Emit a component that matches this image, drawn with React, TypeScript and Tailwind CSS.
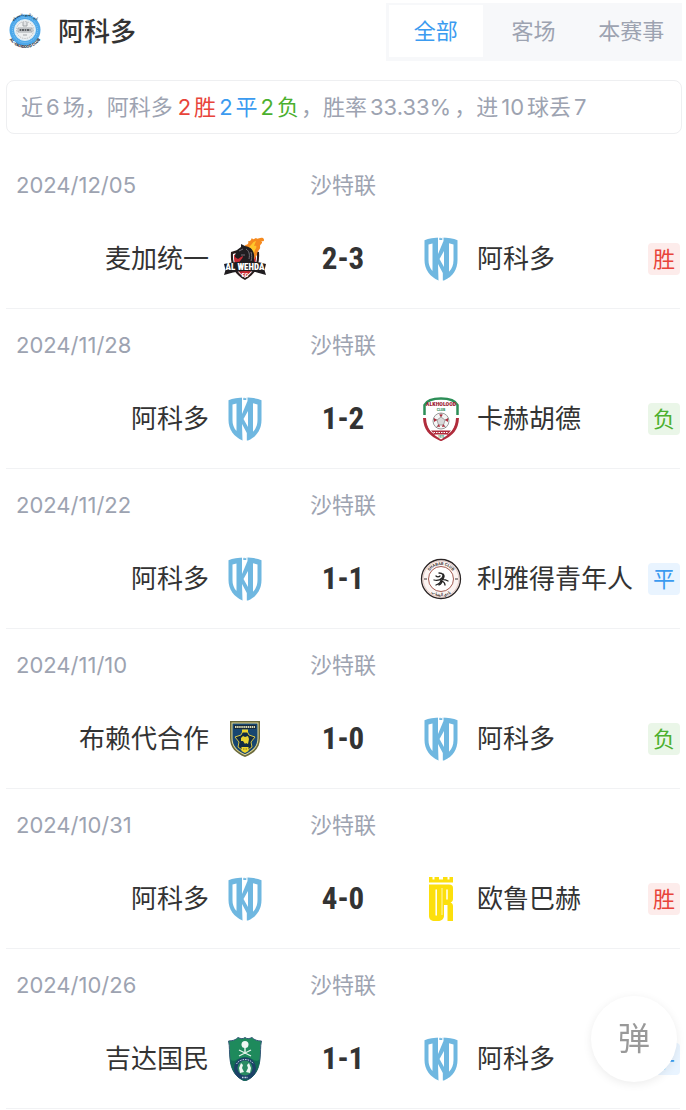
import { useState } from "react";
import type { ReactNode } from "react";

type Result = "win" | "draw" | "loss";

type Team = {
  name: string;
  logo: () => ReactNode;
};

type Match = {
  date: string;
  league: string;
  home: Team;
  away: Team;
  score: string;
  result: Result;
};

function OkhdoodLogo() {
  return (
    <svg viewBox="0 0 44 44" className="size-11 shrink-0" aria-hidden="true">
      <path d="M22 0.500C15 0.500 9.500 1.500 5.500 3.200V23C5.500 33 11 39.500 19.500 43.500H25C34 39.500 38.500 32 38.500 23V3.200C34.500 1.500 29 0.500 22 0.500Z" fill="#6fb7e0" />
      <path d="M9.500 7.500L13.500 6.500V34C10.800 31 9.500 27.500 9.500 23Z" fill="#fff" />
      <path d="M19 0V17L24.500 4V0Z" fill="#fff" />
      <path d="M20.300 0.500L21.200 1.500L21.800 0.500L22.400 1.500L23.300 0.500V3H20.300Z" fill="#6fb7e0" />
      <path d="M19 27L23.800 36V44H19.500Z" fill="#fff" />
      <path d="M25 14V30L20.500 22Z" fill="#fff" />
      <path d="M30 6.300L34.500 7.500V23C34.500 28 33 31.500 30 34.800Z" fill="#fff" />
    </svg>
  );
}

function WehdaLogo() {
  return (
    <svg viewBox="0 0 44 44" className="size-11 shrink-0" aria-hidden="true">
      <path d="M8 15C12 14 17 12 22 10C27 12 32 14 36 15C37 28 33 37 22 43C11 37 7 28 8 15Z" fill="#2a1c1c" />
      <path d="M10 17C14 16 18 14 22 12C26 14 30 16 34 17C34.500 27 31 35.500 22 41C13 35.500 9.500 27 10 17Z" fill="#fff" />
      <path d="M11 18C15 17 18 15 22 13C26 15 30 17 33 18C33.500 27 30 34.500 22 40C14 34.500 10.500 27 11 18Z" fill="#c92b35" />
      <path d="M22 8C25 8 26 6 25 4C28 5 28 2 29 1C30 3 31 2 33 1C35 3 36 0 40 1C42 3 41 5 38 4C41 6 37 7 37 9C38 13 34 13 34 18L30 24L24 16Z" fill="#f58a1f" />
      <path d="M26 10C29 8 29 5 33 4L31 9C34 8 34 10 32 13L30 20L26 16Z" fill="#ffc62b" />
      <path d="M14 13L18 10L18 7L22 9C29 10 32 15 31 22L32 28H16C15 25 20 22 20 19L18 20L15 22L12 20C12 17 13 15 14 13Z" fill="#201d20" />
      <path d="M16 14L20 12M23 12C26 14 27 17 26 22M18 18H22M28 15C29 18 29 21 28 24" stroke="#77737a" fill="none" />
      <path d="M1 27C14 23.500 30 23.500 43 27L41.500 33L43 38L34 35.500C26 33.500 18 33.500 10 35.500L1 38L2.500 33Z" fill="#201d20" />
      <text x="22" y="33" textAnchor="middle" fontSize="9" fontWeight="900" fontFamily="Roboto Condensed, Roboto, sans-serif" fill="#fff">
        AL WEHDA
      </text>
      <text x="22" y="40" textAnchor="middle" fontSize="6" fontWeight="900" fontFamily="Roboto Condensed, Roboto, sans-serif" fill="#fff">
        FC
      </text>
    </svg>
  );
}

function KholoodLogo() {
  return (
    <svg viewBox="0 0 44 44" className="size-11 shrink-0" aria-hidden="true">
      <path d="M5.500 18V8C8 3 14 1.500 22 1.500C30 1.500 36 3 38.500 8V18" fill="none" stroke="#2c8e57" strokeWidth="2.500" />
      <path d="M5.500 21C6 32 11 38 22 42.500C33 38 38 32 38.500 21" fill="none" stroke="#b02c3c" strokeWidth="3" />
      <path d="M8 18V8C16 4 28 4 36 8V18C36 28 34 34 29 37H15C10 34 8 28 8 18Z" fill="#fff" />
      <text x="22" y="9" textAnchor="middle" fontSize="6" fontWeight="900" fontFamily="Roboto Condensed, Roboto, sans-serif" fill="#9e2637">
        ALKHOLOOD
      </text>
      <text x="22" y="13.500" textAnchor="middle" fontSize="4" fontWeight="700" fontFamily="Roboto Condensed, Roboto, sans-serif" fill="#2c8e57">
        CLUB
      </text>
      <circle cx="22" cy="24" r="8" fill="#f5f5f5" stroke="#9b9b9b" />
      <path d="M22 20L26 23L24.500 28H19.500L18 23Z" fill="#d9d9d9" stroke="#888" strokeWidth="0.700" />
      <path d="M22 16V20M26 23L30 22M24.500 28L27 31M19.500 28L17 31M18 23L14 22" stroke="#888" />
      <path d="M20 17.500H24L22 20ZM15 21L18 23L15 25ZM29 21L26 23L29 25ZM18 29.500L20 27L21 30ZM26 29.500L24 27L23 30Z" fill="#b02c3c" />
      <path d="M12 33.500H32L28.500 37.500H15.500Z" fill="#b02c3c" />
      <path d="M14.500 35.500H29.500" stroke="#fff" strokeDasharray="1.500 1" />
      <path d="M15.500 38H28.500L22 42.500Z" fill="#fff" />
      <text x="22" y="41" textAnchor="middle" fontSize="3" fontWeight="700" fontFamily="Roboto Condensed, Roboto, sans-serif" fill="#2c8e57">
        1970
      </text>
    </svg>
  );
}

function ShababLogo() {
  return (
    <svg viewBox="0 0 44 44" className="size-11 shrink-0" aria-hidden="true">
      <defs>
        <path id="shabab-top" d="M8 22A14 14 0 0 1 36 22" />
        <path id="shabab-bottom" d="M5 22A17 17 0 0 0 39 22" />
      </defs>
      <circle cx="22" cy="22" r="19.500" fill="#fbf4f2" stroke="#2b2525" strokeWidth="1.300" />
      <circle cx="22" cy="22" r="18" fill="none" stroke="#d8b5ae" strokeWidth="0.700" />
      <circle cx="22" cy="22" r="12.500" fill="#fff" stroke="#a35b52" />
      <g fontFamily="Roboto, sans-serif" fontSize="4" fontWeight="700" fill="#3a3030" textAnchor="middle">
        <text>
          <textPath href="#shabab-top" startOffset="50%">SHABAB CLUB</textPath>
        </text>
        <text>
          <textPath href="#shabab-bottom" startOffset="50%">نادي الشباب</textPath>
        </text>
      </g>
      <path d="M5 22H8M36 22H39" stroke="#3a3030" />
      <path
        d="M20 16C24 16 25 18 23 21C21 23 18 24 15 23M24 17C26 19 25 21 23 23M17 19C18 20 20 20 21 19M17 28C20 27 22 25 22 23C25 22 27 23 29 24M20 28C22 27 23 25 23 24C25 25 26 27 26 28"
        fill="none"
        stroke="#222"
        strokeWidth="1.300"
        strokeLinecap="round"
      />
    </svg>
  );
}

function TaawounLogo() {
  return (
    <svg viewBox="0 0 44 44" className="size-11 shrink-0" aria-hidden="true">
      <path d="M7 4H37V21C37 30 32 36 22 40C12 36 7 30 7 21Z" fill="#6c6a3c" />
      <path d="M8.500 5.500H35.500V21C35.500 29 31 34.500 22 38.300C13 34.500 8.500 29 8.500 21Z" fill="#e5dc96" />
      <path d="M9.500 6.500H34.500V21C34.500 28.500 30.500 33.500 22 37.200C13.500 33.500 9.500 28.500 9.500 21Z" fill="#174670" />
      <path d="M11 8H33V12H11Z" fill="#17293b" />
      <path d="M12 10H32" stroke="#d9d9b0" strokeWidth="2" strokeDasharray="1.500 0.600" />
      <path d="M20 14H24L26 18L32 20L28 25L29 30L25 33H19L15 30L16 25L12 20L18 18Z" fill="#122c44" stroke="#d5c343" />
      <path d="M19 12.500H25V15.500H19ZM18.500 30H25.500V34L22 36L18.500 34Z" fill="#f0d52c" />
      <path d="M18 21L20 19L22 20L25 19L26 22L25 27L23 26L22 27L20 24L18 24Z" fill="#e9d333" />
      <path d="M20 32H24" stroke="#7c7424" strokeDasharray="1 0.500" />
    </svg>
  );
}

function OroubaLogo() {
  return (
    <svg viewBox="0 0 44 44" className="size-11 shrink-0" aria-hidden="true">
      <path d="M10 0H13.500V2.500H15.500V0H20V2.500H24V0H28.500V2.500H30.500V0H34V5.500H10Z" fill="#fcdf0c" />
      <path d="M10 7.500H30C33 7.500 34 9 34 11V22C34 24 33 25 31.500 25.500C33 26 34 27 34 29V44H28.500V28H25V39C25 42 22 44 19 44H16C12 44 10 42 10 39Z" fill="#fcdf0c" />
      <path d="M17.200 13V38M28 13V22" stroke="#fff" strokeWidth="1.500" strokeLinecap="round" />
      <path d="M23 11V38" stroke="#fff" strokeWidth="0.700" />
    </svg>
  );
}

function AhliLogo() {
  return (
    <svg viewBox="0 0 44 44" className="size-11 shrink-0" aria-hidden="true">
      <path
        d="M5.500 4C9 4 13 3 15 0.500C18 2 20 2 22 0.500C24 2 26 2 29 0.500C31 3 35 4 38.500 4C37 10 38 15 37 22C36 33 31 41 22 44C13 41 8 33 7 22C6 15 7 10 5.500 4Z"
        fill="#1e8a5c"
        stroke="#355a78"
      />
      <path d="M7 22C12 27 14 20 22 20C30 20 32 27 37 22C36 33 31 41 22 44C13 41 8 33 7 22Z" fill="#126c55" />
      <circle cx="22" cy="31.500" r="11" fill="#1c4168" />
      <circle cx="22" cy="31" r="7.500" fill="#298b63" />
      <path d="M22 7V17" stroke="#dff1e8" strokeWidth="1.500" />
      <circle cx="22" cy="7.500" r="3.500" fill="#eef7f2" />
      <path d="M16 13L28 19M28 13L16 19" stroke="#e5f3ec" strokeWidth="1.300" fill="none" />
      <path d="M18 26L20 28L19 31L21 35L17 36L16 31ZM26 26L24 28L25 31L23 35L27 36L28 31Z" fill="#eef7f2" />
      <path d="M13.500 27C17 21 27 21 30.500 27" fill="none" stroke="#c4d6e2" strokeDasharray="1.500 1" />
      <path d="M19 40.500H25" stroke="#c4d6e2" strokeWidth="1.500" strokeDasharray="1 0.500" />
    </svg>
  );
}

function ClubCrest() {
  return (
    <svg viewBox="0 0 40 40" className="size-10 shrink-0" aria-hidden="true">
      <defs>
        <path id="crest-bottom" d="M1 18A18 18 0 0 0 37 18" />
        <path id="crest-top" d="M5 11A17 17 0 0 1 33 11" />
      </defs>
      <circle cx="19" cy="18" r="15.500" fill="#4da8ea" />
      <circle cx="19" cy="18" r="12.500" fill="none" stroke="#8cc8f2" strokeDasharray="1 1" />
      <circle cx="19" cy="18" r="10.500" fill="#eef0f1" stroke="#d4ebf9" />
      <circle cx="19" cy="18" r="8.500" fill="none" stroke="#b6bbbf" strokeDasharray="1.500 1" />
      <path d="M17 10V14H21V10M12 16H26V20H12ZM17 23H21" fill="#e1e3e5" stroke="#8f959a" strokeWidth="0.800" />
      <path d="M13.500 18H24.500" stroke="#30363a" strokeWidth="1.300" strokeDasharray="2 0.500" />
      <g fontFamily="Roboto, sans-serif" fontWeight="900" fill="#1c2a36" textAnchor="middle">
        <text fontSize="4">
          <textPath href="#crest-bottom" startOffset="50%">AL-OKHDOOD CLUB</textPath>
        </text>
        <text fontSize="3">
          <textPath href="#crest-top" startOffset="50%">نادي الأخدود السعودي</textPath>
        </text>
      </g>
    </svg>
  );
}

const okhdood: Team = { name: "阿科多", logo: OkhdoodLogo };

const matches: Match[] = [
  { date: "2024/12/05", league: "沙特联", home: { name: "麦加统一", logo: WehdaLogo }, away: okhdood, score: "2-3", result: "win" },
  { date: "2024/11/28", league: "沙特联", home: okhdood, away: { name: "卡赫胡德", logo: KholoodLogo }, score: "1-2", result: "loss" },
  { date: "2024/11/22", league: "沙特联", home: okhdood, away: { name: "利雅得青年人", logo: ShababLogo }, score: "1-1", result: "draw" },
  { date: "2024/11/10", league: "沙特联", home: { name: "布赖代合作", logo: TaawounLogo }, away: okhdood, score: "1-0", result: "loss" },
  { date: "2024/10/31", league: "沙特联", home: okhdood, away: { name: "欧鲁巴赫", logo: OroubaLogo }, score: "4-0", result: "win" },
  { date: "2024/10/26", league: "沙特联", home: { name: "吉达国民", logo: AhliLogo }, away: okhdood, score: "1-1", result: "draw" },
];

const resultBadge: Record<Result, { label: string; className: string }> = {
  win: { label: "胜", className: "bg-[#fdeceb] text-[#e8443a]" },
  draw: { label: "平", className: "bg-[#e9f4ff] text-[#3b9bf0]" },
  loss: { label: "负", className: "bg-[#eaf6e8] text-[#4bb02f]" },
};

const tabs = ["全部", "客场", "本赛事"];

// Number inside Chinese text, with a little air on both sides
function Num({ children }: { children: ReactNode }) {
  return <span className="mx-[3px]">{children}</span>;
}

function MatchRow({ match }: { match: Match }) {
  const HomeLogo = match.home.logo;
  const AwayLogo = match.away.logo;
  const badge = resultBadge[match.result];

  return (
    <li className="border-b border-[#f1f2f4] pt-5 pb-[27px]">
      <div className="grid grid-cols-[1fr_152px_1fr] text-[22px] leading-8 text-[#9da3b1]">
        <time className="pl-2.5">{match.date}</time>
        <span className="text-center">{match.league}</span>
      </div>
      <div className="mt-9 grid grid-cols-[1fr_152px_1fr] items-center text-[26px] leading-8 text-[#333]">
        <div className="flex items-center justify-end gap-3.5">
          <span>{match.home.name}</span>
          <HomeLogo />
        </div>
        <span className="text-center font-['Roboto_Condensed','Roboto',sans-serif] text-[31px] font-bold">
          {match.score}
        </span>
        <div className="flex items-center gap-3.5">
          <AwayLogo />
          <span className="flex-1 whitespace-nowrap">{match.away.name}</span>
          <span className={`size-8 shrink-0 rounded text-center text-[22px] leading-8 ${badge.className}`}>
            {badge.label}
          </span>
        </div>
      </div>
    </li>
  );
}

export default function App() {
  const [activeTab, setActiveTab] = useState(tabs[0]);

  return (
    <main className="bg-white pt-[3px] pr-1 pl-1.5 font-['Inter','Noto_Sans_CJK_SC',sans-serif]">
      <header className="flex items-center justify-between">
        <div className="flex items-center gap-3">
          <ClubCrest />
          <h1 className="text-[26px] leading-8 font-medium text-[#333]">{okhdood.name}</h1>
        </div>
        <div className="grid h-[58px] w-[296px] grid-cols-3 gap-1 bg-[#f7f8fa] pt-0.5 pr-1 pb-1 pl-[3px]">
          {tabs.map((tab) => (
            <button
              key={tab}
              type="button"
              onClick={() => setActiveTab(tab)}
              className={`text-[22px] leading-8 whitespace-nowrap ${
                tab === activeTab ? "bg-white text-[#3b9bf0]" : "text-[#9da3b1]"
              }`}
            >
              {tab}
            </button>
          ))}
        </div>
      </header>

      <p className="mt-[19px] rounded-lg border border-[#eeeff1] px-3.5 py-2.5 text-[22px] leading-8 text-[#9da3b1]">
        近<Num>6</Num>场，阿科多
        <span className="mx-0.5">
          <span className="text-[#e8443a]">
            <Num>2</Num>胜
          </span>
          <span className="text-[#3b9bf0]">
            <Num>2</Num>平
          </span>
          <span className="text-[#4bb02f]">
            <Num>2</Num>负
          </span>
        </span>
        ，胜率<Num>33.33%</Num>，进<Num>10</Num>球丢<Num>7</Num>
      </p>

      <ul className="mt-[15px] mr-0.5">
        {matches.map((match) => (
          <MatchRow key={match.date} match={match} />
        ))}
      </ul>

      <button
        type="button"
        className="fixed right-[9px] bottom-7 size-[86px] rounded-full bg-white text-[32px] text-[#999] shadow-[0_2px_10px_rgba(0,0,0,0.08)]"
      >
        弹
      </button>
    </main>
  );
}
